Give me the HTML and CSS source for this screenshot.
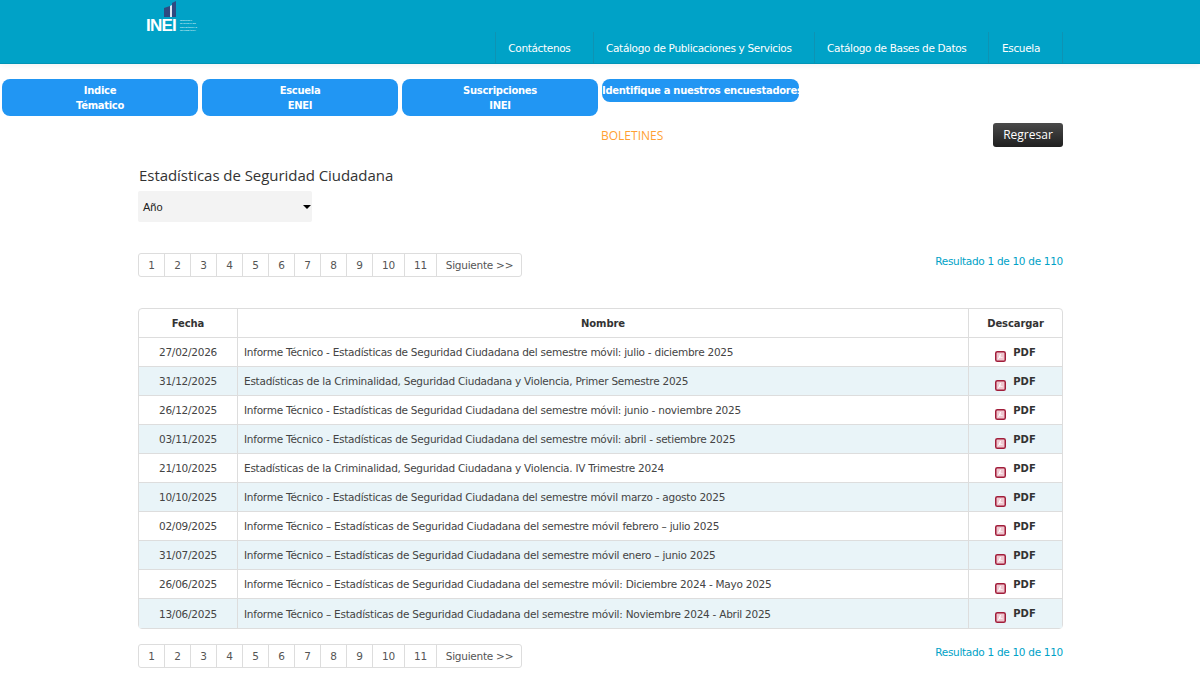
FILE: index.html
```html
<!DOCTYPE html>
<html lang="es">
<head>
  <meta charset="UTF-8">
  <title>Boletines - INEI</title>
  <link rel="stylesheet" href="styles.css">
</head>
<body>
  <svg width="0" height="0" class="icon-defs">
    <symbol id="pdf" viewBox="0 0 11 11">
      <rect x="0.75" y="0.75" width="9.5" height="9.5" rx="1.6" fill="#efc6cf" stroke="#a11d3a" stroke-width="1.5"/>
      <path d="M2.8 8.6 L5 3 L6 3 L5.3 5.4 L8.6 7 L5 6.6 Z" fill="#fff"/>
    </symbol>
  </svg>

  <!-- Cabecera -->
  <div class="header">
    <div class="logo">
      <svg class="logo-mark" width="13" height="16" viewBox="0 0 13 16">
        <path d="M0 7 L6 5 V16 H0 Z" fill="#2f4a80"/>
        <path d="M6 5 L8 4 V16 H6 Z" fill="#dfe8f2"/>
        <path d="M8 2 L12 0 V16 H8 Z" fill="#2f4a80"/>
      </svg>
      <div class="logo-row">
        <span class="logo-name">INEI</span>
        <span class="logo-small">INSTITUTO<br>NACIONAL DE<br>ESTADÍSTICA E<br>INFORMÁTICA</span>
      </div>
    </div>
    <ul class="nav">
      <li><a href="#">Contáctenos</a></li>
      <li><a href="#">Catálogo de Publicaciones y Servicios</a></li>
      <li><a href="#">Catálogo de Bases de Datos</a></li>
      <li><a href="#">Escuela</a></li>
    </ul>
  </div>

  <!-- Accesos -->
  <div class="tabs">
    <a class="tab" href="#">Indice<br>Tématico</a>
    <a class="tab" href="#">Escuela<br>ENEI</a>
    <a class="tab" href="#">Suscripciones<br>INEI</a>
    <a class="tab tab-wide" href="#">Identifique a nuestros encuestadores</a>
  </div>

  <div class="container">
    <div class="title-row">
      <span class="boletines">BOLETINES</span>
      <a class="btn-back" href="#">Regresar</a>
    </div>

    <h2 class="page-title">Estadísticas de Seguridad Ciudadana</h2>
    <div class="select">Año<span class="caret"></span></div>

    <div class="pager-row pager-top">
      <ul class="pager">
        <li>1</li><li>2</li><li>3</li><li>4</li><li>5</li><li>6</li><li>7</li><li>8</li><li>9</li><li class="two">10</li><li class="two">11</li><li class="next">Siguiente &gt;&gt;</li>
      </ul>
      <span class="result">Resultado 1 de 10 de 110</span>
    </div>

    <!-- Tabla de boletines -->
    <table class="data">
      <thead>
        <tr><th class="col-date">Fecha</th><th>Nombre</th><th class="col-dl">Descargar</th></tr>
      </thead>
      <tbody>
        <tr><td class="center">27/02/2026</td><td>Informe Técnico - Estadísticas de Seguridad Ciudadana del semestre móvil: julio - diciembre 2025</td><td class="center"><svg class="pdf-icon"><use href="#pdf"/></svg><b>PDF</b></td></tr>
        <tr><td class="center">31/12/2025</td><td>Estadísticas de la Criminalidad, Seguridad Ciudadana y Violencia, Primer Semestre 2025</td><td class="center"><svg class="pdf-icon"><use href="#pdf"/></svg><b>PDF</b></td></tr>
        <tr><td class="center">26/12/2025</td><td>Informe Técnico - Estadísticas de Seguridad Ciudadana del semestre móvil: junio - noviembre 2025</td><td class="center"><svg class="pdf-icon"><use href="#pdf"/></svg><b>PDF</b></td></tr>
        <tr><td class="center">03/11/2025</td><td>Informe Técnico - Estadísticas de Seguridad Ciudadana del semestre móvil: abril - setiembre 2025</td><td class="center"><svg class="pdf-icon"><use href="#pdf"/></svg><b>PDF</b></td></tr>
        <tr><td class="center">21/10/2025</td><td>Estadísticas de la Criminalidad, Seguridad Ciudadana y Violencia. IV Trimestre 2024</td><td class="center"><svg class="pdf-icon"><use href="#pdf"/></svg><b>PDF</b></td></tr>
        <tr><td class="center">10/10/2025</td><td>Informe Técnico - Estadísticas de Seguridad Ciudadana del semestre móvil marzo - agosto 2025</td><td class="center"><svg class="pdf-icon"><use href="#pdf"/></svg><b>PDF</b></td></tr>
        <tr><td class="center">02/09/2025</td><td>Informe Técnico – Estadísticas de Seguridad Ciudadana del semestre móvil febrero – julio 2025</td><td class="center"><svg class="pdf-icon"><use href="#pdf"/></svg><b>PDF</b></td></tr>
        <tr><td class="center">31/07/2025</td><td>Informe Técnico – Estadísticas de Seguridad Ciudadana del semestre móvil enero – junio 2025</td><td class="center"><svg class="pdf-icon"><use href="#pdf"/></svg><b>PDF</b></td></tr>
        <tr><td class="center">26/06/2025</td><td>Informe Técnico – Estadísticas de Seguridad Ciudadana del semestre móvil: Diciembre 2024 - Mayo 2025</td><td class="center"><svg class="pdf-icon"><use href="#pdf"/></svg><b>PDF</b></td></tr>
        <tr><td class="center">13/06/2025</td><td>Informe Técnico – Estadísticas de Seguridad Ciudadana del semestre móvil: Noviembre 2024 - Abril 2025</td><td class="center"><svg class="pdf-icon"><use href="#pdf"/></svg><b>PDF</b></td></tr>
      </tbody>
    </table>

    <div class="pager-row pager-bottom">
      <ul class="pager">
        <li>1</li><li>2</li><li>3</li><li>4</li><li>5</li><li>6</li><li>7</li><li>8</li><li>9</li><li class="two">10</li><li class="two">11</li><li class="next">Siguiente &gt;&gt;</li>
      </ul>
      <span class="result">Resultado 1 de 10 de 110</span>
    </div>
  </div>
</body>
</html>
```
FILE: styles.css
```css
/* Generales */
body {
  font-family: "DejaVu Sans", Verdana, sans-serif;
  font-size: 10.5px;
  letter-spacing: -0.25px;
  margin: 0;
  padding: 0;
  background-color: #fff;
  color: #333;
  overflow: hidden;
}

a {
  text-decoration: none;
}

.icon-defs {
  position: absolute;
}

/* Cabecera */
.header {
  height: 63px;
  background-color: #00a2c7;
  border-bottom: 1px solid #0094b6;
  box-shadow: 0 2px 6px rgba(0,0,0,0.05);
  display: flex;
  justify-content: space-between;
  padding: 0 137px 0 146px;
}

.logo {
  width: 56px;
  padding-top: 1px;
  color: #fff;
}

.logo-mark {
  display: block;
  margin-left: 18px;
}

.logo-row {
  display: flex;
  align-items: center;
  gap: 4px;
  margin-top: 1px;
}

.logo-name {
  font-family: "Liberation Sans", Arial, sans-serif;
  font-size: 17px;
  font-weight: bold;
  letter-spacing: -0.8px;
  line-height: 15px;
}

.logo-small {
  font-family: "Liberation Sans", Arial, sans-serif;
  font-size: 2.3px;
  line-height: 3.3px;
  letter-spacing: 0;
  font-weight: bold;
  white-space: nowrap;
  color: #d8eef4;
}

.nav {
  list-style: none;
  margin: 32px 0 0;
  padding: 0;
  display: flex;
  height: 31px;
  border-left: 1px solid #0e93b3;
}

.nav li {
  border-right: 1px solid #0e93b3;
}

.nav a {
  display: block;
  padding: 10px 22px 0 12.5px;
  color: #fff;
  font-size: 10.5px;
  letter-spacing: -0.33px;
  line-height: 13px;
  white-space: nowrap;
}

/* Accesos */
.tabs {
  display: flex;
  align-items: flex-start;
  gap: 4px;
  padding: 15px 0 0 2px;
}

.tab {
  width: 196px;
  height: 37px;
  background-color: #2196f3;
  border-radius: 8px;
  color: #fff;
  font-weight: bold;
  font-size: 10px;
  letter-spacing: -0.3px;
  line-height: 14.5px;
  text-align: center;
  padding-top: 5px;
  box-sizing: border-box;
}

.tab-wide {
  width: 197px;
  height: 23px;
  white-space: nowrap;
  text-align: left;
}

/* Contenido */
.container {
  width: 925px;
  margin: 0 0 0 138px;
}

.title-row {
  display: flex;
  justify-content: space-between;
  align-items: center;
  height: 24px;
  margin-top: 7px;
}

.boletines {
  margin-left: 463px;
  font-family: "Open Sans", sans-serif;
  font-size: 12px;
  letter-spacing: 0;
  color: #ff9f33;
}

.btn-back {
  width: 70px;
  height: 24px;
  box-sizing: border-box;
  background: linear-gradient(#4a4a4a, #1f1f1f);
  border-radius: 3px;
  color: #fff;
  font-family: "Open Sans", sans-serif;
  font-size: 12px;
  letter-spacing: 0;
  line-height: 24px;
  text-align: center;
}

.page-title {
  margin: 17px 0 0 1px;
  font-family: "Open Sans", sans-serif;
  font-size: 15px;
  letter-spacing: -0.05px;
  font-weight: normal;
  line-height: 22px;
  color: #333;
}

.select {
  width: 174px;
  height: 31px;
  margin-top: 5px;
  background-color: #f3f3f3;
  border-radius: 2px;
  box-sizing: border-box;
  padding: 0 1px 0 5px;
  display: flex;
  justify-content: space-between;
  align-items: center;
  font-family: "Liberation Sans", Arial, sans-serif;
  font-size: 11px;
  letter-spacing: 0;
  color: #222;
}

.caret {
  width: 0;
  height: 0;
  border-left: 4px solid transparent;
  border-right: 4px solid transparent;
  border-top: 4px solid #000;
}

/* Paginador */
.pager-row {
  display: flex;
  justify-content: space-between;
  align-items: flex-start;
}

.pager-top {
  margin-top: 31px;
}

.pager-bottom {
  margin-top: 15px;
}

.pager {
  list-style: none;
  margin: 0;
  padding: 0;
  display: flex;
  height: 24px;
  box-sizing: border-box;
  border: 1px solid #ddd;
  border-radius: 3px;
}

.pager li {
  width: 26px;
  box-sizing: border-box;
  border-right: 1px solid #ddd;
  text-align: center;
  line-height: 23px;
  font-size: 10.5px;
  color: #555;
}

.pager li.two {
  width: 32px;
}

.pager li.next {
  width: 84px;
  padding-left: 1px;
  border-right: 0;
}

.result {
  color: #00a2c7;
  font-size: 10.5px;
  letter-spacing: -0.3px;
  line-height: 14px;
  margin-top: 1px;
}

/* Tabla */
.data {
  width: 925px;
  margin-top: 31px;
  border-collapse: separate;
  border-spacing: 0;
  border: 1px solid #ddd;
  border-radius: 4px;
  table-layout: fixed;
}

.data th,
.data td {
  height: 29px;
  box-sizing: border-box;
  padding: 0 6px;
  border-bottom: 1px solid #ddd;
  border-right: 1px solid #ddd;
  text-align: left;
  font-size: 10.5px;
  color: #444;
  white-space: nowrap;
}

.data th {
  text-align: center;
  font-size: 10px;
  letter-spacing: -0.1px;
  color: #333;
}

.data th:last-child,
.data td:last-child {
  border-right: 0;
}

.data td:last-child {
  padding-top: 5px;
}

.data tbody tr:last-child td {
  border-bottom: 0;
}

.data tbody tr:nth-child(even) td {
  background-color: #e9f4f8;
}

.data td.center {
  text-align: center;
}

.col-date {
  width: 99px;
}

.col-dl {
  width: 93px;
}

.data b {
  font-size: 10px;
  letter-spacing: 0;
  color: #333;
  position: relative;
  top: -2px;
}

.pdf-icon {
  width: 11px;
  height: 11px;
  margin-right: 7px;
  vertical-align: -4px;
}
```
